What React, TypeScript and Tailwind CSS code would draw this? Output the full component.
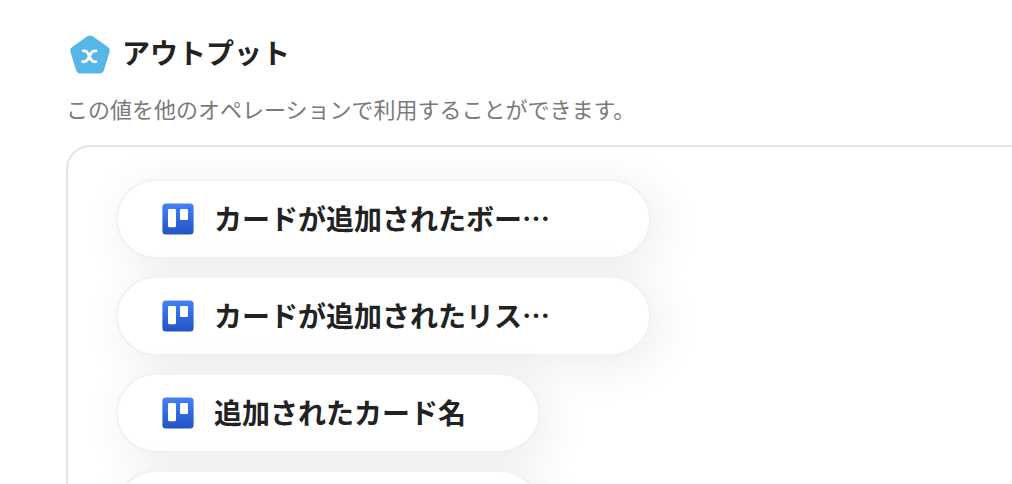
import clsx from 'clsx';

type Output = {
  id: number;
  label?: string;
  wide?: boolean;
};

const outputs: Output[] = [
  { id: 1, label: 'カードが追加されたボー…', wide: true },
  { id: 2, label: 'カードが追加されたリス…', wide: true },
  { id: 3, label: '追加されたカード名' },
  { id: 4 },
];

function OutputIcon() {
  return (
    <svg viewBox="0 0 40 40" className="size-10 shrink-0" aria-hidden="true">
      <path
        d="M17 1.6Q20-.4 23 1.6L37.8 12Q40.4 13.9 39.5 17L34 35Q32.9 38.4 29.6 38.4H10.4Q7.1 38.4 6 35L.5 17Q-.4 13.9 2.2 12Z"
        fill="#56b7e6"
      />
      <path
        d="M13.2 15.9C17 15.3 17.6 17.6 19.4 21.3S22.2 27.3 26 26.7M26 15.9C22.2 15.3 21.2 17.6 19.4 21.3S16.4 27.3 12.6 26.7"
        fill="none"
        stroke="#fff"
        strokeWidth="2.8"
        strokeLinecap="round"
      />
    </svg>
  );
}

function TrelloIcon() {
  return (
    <svg viewBox="0 0 32 32" className="size-8 shrink-0" aria-hidden="true">
      <defs>
        <linearGradient id="trello" x1="0" y1="0" x2="0" y2="1">
          <stop offset="0" stopColor="#4282f8" />
          <stop offset="1" stopColor="#2352c5" />
        </linearGradient>
      </defs>
      <rect x="0.4" y="0.4" width="31.2" height="31.2" rx="3.5" fill="url(#trello)" />
      <rect x="6" y="6" width="8" height="18.3" rx="1.2" fill="#fff" />
      <rect x="18" y="6" width="8" height="11" rx="1.2" fill="#fff" />
    </svg>
  );
}

function OutputPill({ label, wide }: Output) {
  return (
    <button
      type="button"
      className={clsx(
        'flex h-20 items-center gap-5 rounded-full border-2 border-[#f2f2f2] bg-white bg-clip-padding pl-11 text-left shadow-[8px_8px_48px_rgba(0,0,0,0.08)]',
        wide ? 'w-[535px]' : 'w-[424px]'
      )}
    >
      <TrelloIcon />
      {label && <span className="pb-0.5 text-[28px] leading-10 font-bold whitespace-nowrap">{label}</span>}
    </button>
  );
}

export default function App() {
  return (
    <main
      lang="ja"
      className="flex h-screen flex-col overflow-hidden bg-white pt-[34px] pl-[66px] font-['Noto_Sans_CJK_JP',sans-serif] text-[#222]"
    >
      <header className="flex items-center gap-3 pl-1">
        <OutputIcon />
        <h1 className="pb-1.5 text-[28px] leading-9 font-bold">アウトプット</h1>
      </header>
      <p className="mt-3 text-[22px] leading-10 text-[#7a7a7a]">
        この値を他のオペレーションで利用することができます。
      </p>
      <section className="mt-[17px] flex-1 rounded-tl-3xl border-t-2 border-l-2 border-[#e5e5e5] pt-8 pl-12">
        <ul className="flex flex-col items-start gap-[17px]">
          {outputs.map((output) => (
            <li key={output.id}>
              <OutputPill {...output} />
            </li>
          ))}
        </ul>
      </section>
    </main>
  );
}
